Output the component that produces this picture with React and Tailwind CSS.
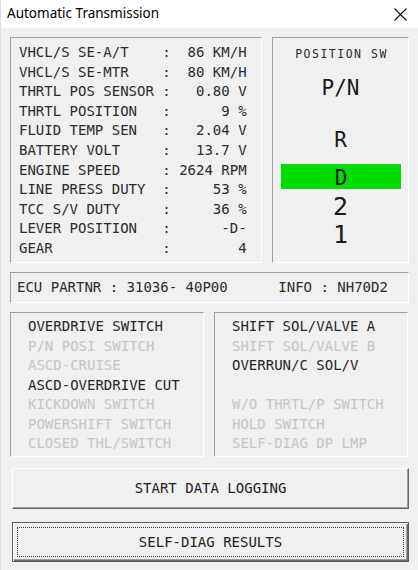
import React from 'react';

const mono = "font-['DejaVu_Sans_Mono','Liberation_Mono',monospace]";

const dataRows = [
  ['VHCL/S SE-A/T', '86 KM/H'],
  ['VHCL/S SE-MTR', '80 KM/H'],
  ['THRTL POS SENSOR', '0.80 V'],
  ['THRTL POSITION', '9 %'],
  ['FLUID TEMP SEN', '2.04 V'],
  ['BATTERY VOLT', '13.7 V'],
  ['ENGINE SPEED', '2624 RPM'],
  ['LINE PRESS DUTY', '53 %'],
  ['TCC S/V DUTY', '36 %'],
  ['LEVER POSITION', '-D-'],
  ['GEAR', '4'],
];

const leftSwitches = [
  ['OVERDRIVE SWITCH', true],
  ['P/N POSI SWITCH', false],
  ['ASCD-CRUISE', false],
  ['ASCD-OVERDRIVE CUT', true],
  ['KICKDOWN SWITCH', false],
  ['POWERSHIFT SWITCH', false],
  ['CLOSED THL/SWITCH', false],
];

const rightSwitches = [
  ['SHIFT SOL/VALVE A', true],
  ['SHIFT SOL/VALVE B', false],
  ['OVERRUN/C SOL/V', true],
  ['', false],
  ['W/O THRTL/P SWITCH', false],
  ['HOLD SWITCH', false],
  ['SELF-DIAG DP LMP', false],
];

const sunken = 'border border-t-[#a0a0a0] border-l-[#a0a0a0] border-r-white border-b-white';

const SwitchList = ({ items }) => (
  <div className={`${sunken} w-[194px] h-[145px] pt-[4px] pl-[17px]`}>
    {items.map(([label, on], i) => (
      <div
        key={i}
        className={`h-[19.5px] leading-[19.5px] text-[14px] whitespace-pre ${on ? 'text-[#262626]' : 'text-[#c6c6c6]'}`}
      >
        {label}
      </div>
    ))}
  </div>
);

export default function App() {
  return (
    <div className={`w-[418px] h-[570px] bg-[#f0f0f0] flex flex-col border-l border-[#d5dfea] ${mono}`}>
      {/* Title bar */}
      <div className="h-[28px] bg-white flex items-center justify-between pl-[6px] pr-[11px]">
        <span className="font-['Noto_Sans',sans-serif] text-[13.5px] text-black leading-none">
          Automatic Transmission
        </span>
        <svg width="13" height="13" viewBox="0 0 13 13">
          <path d="M0.5 0.5 L12.5 12.5 M12.5 0.5 L0.5 12.5" stroke="#111" strokeWidth="1.1" />
        </svg>
      </div>

      <div className="flex flex-col px-[9px] pt-[9px] text-[#2b2b2b]">
        {/* Top panels */}
        <div className="flex gap-[10px]">
          <div className={`${sunken} w-[252px] h-[226px] pt-[5px] pl-[8px]`}>
            {dataRows.map(([label, value]) => (
              <div key={label} className="h-[19.6px] leading-[19.6px] text-[14px] whitespace-pre">
                {`${label.padEnd(17)}: ${value.padStart(8)}`}
              </div>
            ))}
          </div>

          <div className={`${sunken} w-[137px] h-[226px] flex flex-col items-center pt-[8px]`}>
            <div className="h-[16px] leading-[16px] text-[11.5px] tracking-[1.5px] text-[#302828] pl-[2px]">
              POSITION SW
            </div>
            <div className="mt-[11px] h-[30px] leading-[30px] text-[21px] text-[#1a1a1a]">P/N</div>
            <div className="mt-[22px] h-[30px] leading-[30px] text-[21px] text-[#1a1a1a]">R</div>
            <div className="mt-[9px] h-[25px] self-stretch ml-[8px] mr-[7px] bg-[#00dc00] flex justify-center leading-[28px] text-[21px] text-[#111]">
              D
            </div>
            <div className="mt-[4px] h-[28px] leading-[28px] text-[25px] text-[#1a1a1a]">2</div>
            <div className="h-[28px] leading-[28px] text-[25px] text-[#1a1a1a]">1</div>
          </div>
        </div>

        {/* ECU info */}
        <div className={`${sunken} mt-[9px] h-[31px] flex items-center pl-[6px] text-[14px] whitespace-pre`}>
          {'ECU PARTNR : 31036- 40P00      INFO : NH70D2'}
        </div>

        {/* Switch panels */}
        <div className="mt-[9px] flex gap-[10px]">
          <SwitchList items={leftSwitches} />
          <SwitchList items={rightSwitches} />
        </div>

        {/* Buttons */}
        <button className="mt-[11px] ml-[2px] h-[41px] w-[397px] bg-[#f0f0f0] border border-t-white border-l-white border-r-[#696969] border-b-[#696969] shadow-[inset_-1px_-1px_0_#a0a0a0] text-[14px] text-[#222] flex items-center justify-center">
          START DATA LOGGING
        </button>

        <button className="mt-[13px] ml-[2px] h-[40px] w-[397px] bg-[#f0f0f0] border border-[#5a5a5a] shadow-[inset_1px_1px_0_#fff,inset_-1px_-1px_0_#696969,inset_-2px_-2px_0_#a0a0a0] p-[4px] flex">
          <div className="flex-1 border border-dotted border-[#333] flex items-center justify-center text-[14px] text-[#222]">
            SELF-DIAG RESULTS
          </div>
        </button>
      </div>
    </div>
  );
}
